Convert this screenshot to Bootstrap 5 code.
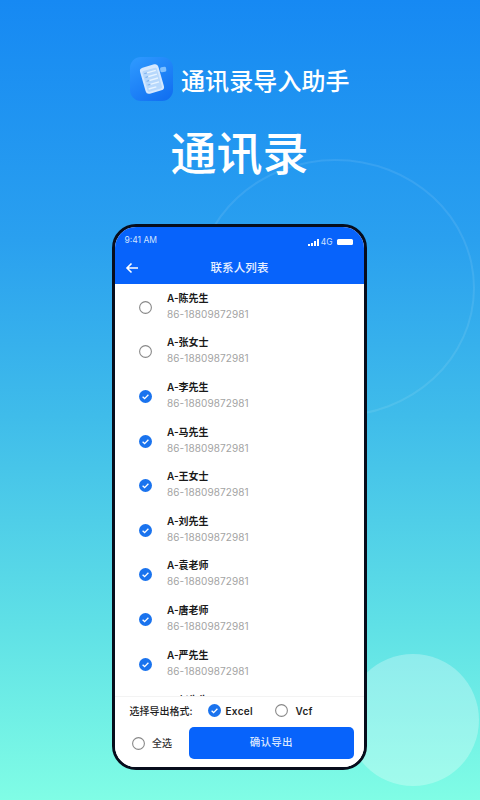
<!doctype html>
<html lang="zh"><head><meta charset="utf-8"><title>通讯录</title>
<link href="https://cdn.jsdelivr.net/npm/bootstrap@5.3.0/dist/css/bootstrap.min.css" rel="stylesheet">
<style>
html,body{height:800px;overflow:hidden}
body{font-family:Inter,"Noto Sans CJK SC",sans-serif;background:linear-gradient(180deg,#1689f3 0%,#2aa0ef 30%,#3fbcea 52%,#5fe0e6 78%,#80fde5 100%);position:relative;width:480px}
.deco-ring{position:absolute;left:196px;top:159px;width:279px;height:258px;border-radius:50%;border:2px solid rgba(255,255,255,.09)}
.deco-disc{position:absolute;left:347px;top:654px;width:132px;height:132px;border-radius:50%;background:rgba(255,255,255,.28)}
.stage{position:relative;height:800px}
.brand{padding-top:57px;padding-left:130px;gap:8px;height:101px}
.brand-name{font-size:24px;line-height:44px;color:#fff;letter-spacing:.1px;font-weight:500;padding-top:3px}
.logo-box{width:43px;height:44px;border-radius:11px;background:linear-gradient(145deg,#2f9bff,#0f6cf0)}
.hero{font-size:46px;line-height:60px;color:#fff;font-weight:500;text-align:center;margin:22px 0 0;padding-right:1px;height:101px}
.device{width:255px;height:546px;margin:0 0 0 112px;border:3px solid #070d1c;border-radius:24px;background:#fff;overflow:hidden;position:relative}
.top-blue{background:#0763fb;height:57px;color:#fff}
.status{height:23px;padding:7px 11.5px 0 9.5px;font-size:8.5px;color:#cfe2ff;line-height:12px}
.bars{gap:1px;align-items:flex-end;height:7px;margin-right:-2px}
.bars i{display:block;width:2px;background:#fff}
.batt{width:16px;height:6px;background:#fff;border-radius:1.5px}
.navline{height:34px;padding:1px 10px 0;position:relative}
.navline svg{width:14px;height:12px}
.nav-name{font-size:11.5px;font-weight:500;letter-spacing:.1px;color:#e8f0ff;flex:1;text-align:center;padding-right:14px;line-height:18px}
.rows{height:414px;overflow:hidden;padding-top:1px}
.person{height:44.6px;padding-left:24px;gap:15px;align-items:center}
.person-body{margin-top:-2px}
.person-body.tail{margin-top:6px}
.pname{font-size:10px;line-height:16px;font-weight:600;color:#1a1a1a}
.pnum{font-size:10px;line-height:17px;color:#a3a3a3;letter-spacing:.1px}
.tick{width:13px;height:13px;flex:none;display:block}
.panel{height:71px;border-top:1px solid #f3f3f3;background:#fff;position:relative}
.fmt-row{padding:0 0 3px 14.5px;height:30px;font-size:10px;color:#1e1e1e;font-weight:500;line-height:16px}
.fmt-label{width:66px;white-space:nowrap}
.fmt-a{margin-left:12px;gap:5px;width:67px;letter-spacing:.3px;font-weight:600}
.fmt-b{gap:8px;letter-spacing:.3px;font-weight:600}
.act-row{padding:0 10.5px 0 17px;align-items:center}
.all-pick{width:57px;gap:7px;font-size:10px;color:#333;font-weight:500}
.go-btn{flex:1;height:32px;background:#0763fb;border:0;border-radius:5px;color:#dbe8ff;font-size:10.5px;font-weight:500;letter-spacing:.3px;padding:0}
</style></head><body>
<div class="deco-ring"></div><div class="deco-disc"></div>
<div class="stage">
<div class="brand d-flex">
<div class="logo-box d-flex align-items-center justify-content-center"><svg width="34" height="34" viewBox="0 0 34 34" aria-hidden="true"><rect x="25" y="5" width="6" height="5" rx="1.5" fill="#7fc0ff" transform="rotate(-8 28 6)"/><g transform="rotate(-16 17 17)"><rect x="7.5" y="3.5" width="19" height="27" rx="3.5" fill="#d5e8ff"/><rect x="9.5" y="7" width="15" height="21.5" rx="1.5" fill="#b7d8fc"/><g fill="#e8f4ff"><rect x="11" y="9" width="12" height="1.4"/><rect x="11" y="13" width="12" height="1.4"/><rect x="11" y="17" width="12" height="1.4"/><rect x="11" y="21" width="12" height="1.4"/><rect x="11" y="25" width="8" height="1.4"/></g><g fill="#7fb3ee"><rect x="11" y="9" width="3" height="1.4"/><rect x="11" y="13" width="3" height="1.4"/><rect x="11" y="17" width="3" height="1.4"/><rect x="11" y="21" width="3" height="1.4"/></g></g></svg></div>
<div class="brand-name">通讯录导入助手</div>
</div>
<h1 class="hero">通讯录</h1>
<div class="device d-flex flex-column">
<div class="top-blue">
<div class="status d-flex justify-content-between"><span>9:41 AM</span><span class="d-flex align-items-center gap-1"><span class="bars d-flex"><i style="height:2px"></i><i style="height:3px"></i><i style="height:5px"></i><i style="height:7px"></i></span><span>4G</span><span class="batt"></span></span></div>
<div class="navline d-flex align-items-center"><svg viewBox="0 0 14 12" aria-hidden="true"><path d="M13 6H2M6.5 1.5 2 6l4.5 4.5" fill="none" stroke="#fff" stroke-width="1.6"/></svg><div class="nav-name">联系人列表</div></div>
</div>
<div class="rows" id="rows"></div>
<div class="panel">
<div class="fmt-row d-flex align-items-center"><span class="fmt-label">选择导出格式:</span><span class="fmt-a d-flex align-items-center"><svg class="tick" viewBox="0 0 13 13"><circle cx="6.5" cy="6.5" r="6.5" fill="#1a73ee"/><path d="M3.6 6.8 5.6 8.6 9.4 4.8" fill="none" stroke="#fff" stroke-width="1.3"/></svg>Excel</span><span class="fmt-b d-flex align-items-center"><svg class="tick" viewBox="0 0 13 13"><circle cx="6.5" cy="6.5" r="5.9" fill="#fff" stroke="#888" stroke-width="1.1"/></svg>Vcf</span></div>
<div class="act-row d-flex"><span class="all-pick d-flex align-items-center"><svg class="tick" viewBox="0 0 13 13"><circle cx="6.5" cy="6.5" r="5.9" fill="#fff" stroke="#888" stroke-width="1.1"/></svg>全选</span><button type="button" class="btn go-btn">确认导出</button></div>
</div>
</div>
</div>
<script>
var names=["陈先生","张女士","李先生","马先生","王女士","刘先生","袁老师","唐老师","严先生","赵先生"];
var off='<svg class="tick" viewBox="0 0 13 13"><circle cx="6.5" cy="6.5" r="5.9" fill="#fff" stroke="#888" stroke-width="1.1"/></svg>';
var on='<svg class="tick" viewBox="0 0 13 13"><circle cx="6.5" cy="6.5" r="6.5" fill="#1a73ee"/><path d="M3.6 6.8 5.6 8.6 9.4 4.8" fill="none" stroke="#fff" stroke-width="1.3"/></svg>';
document.getElementById('rows').innerHTML=names.map(function(n,i){
  var last=i===names.length-1;
  return '<div class="person d-flex">'+(last?'<span class="tick"></span>':(i<2?off:on))+'<div class="person-body'+(last?' tail align-self-start':'')+'"><div class="pname">A-'+n+'</div>'+(last?'':'<div class="pnum">86-18809872981</div>')+'</div></div>';
}).join('');
</script>
<script src="https://cdn.jsdelivr.net/npm/bootstrap@5.3.0/dist/js/bootstrap.bundle.min.js"></script>
</body></html>
